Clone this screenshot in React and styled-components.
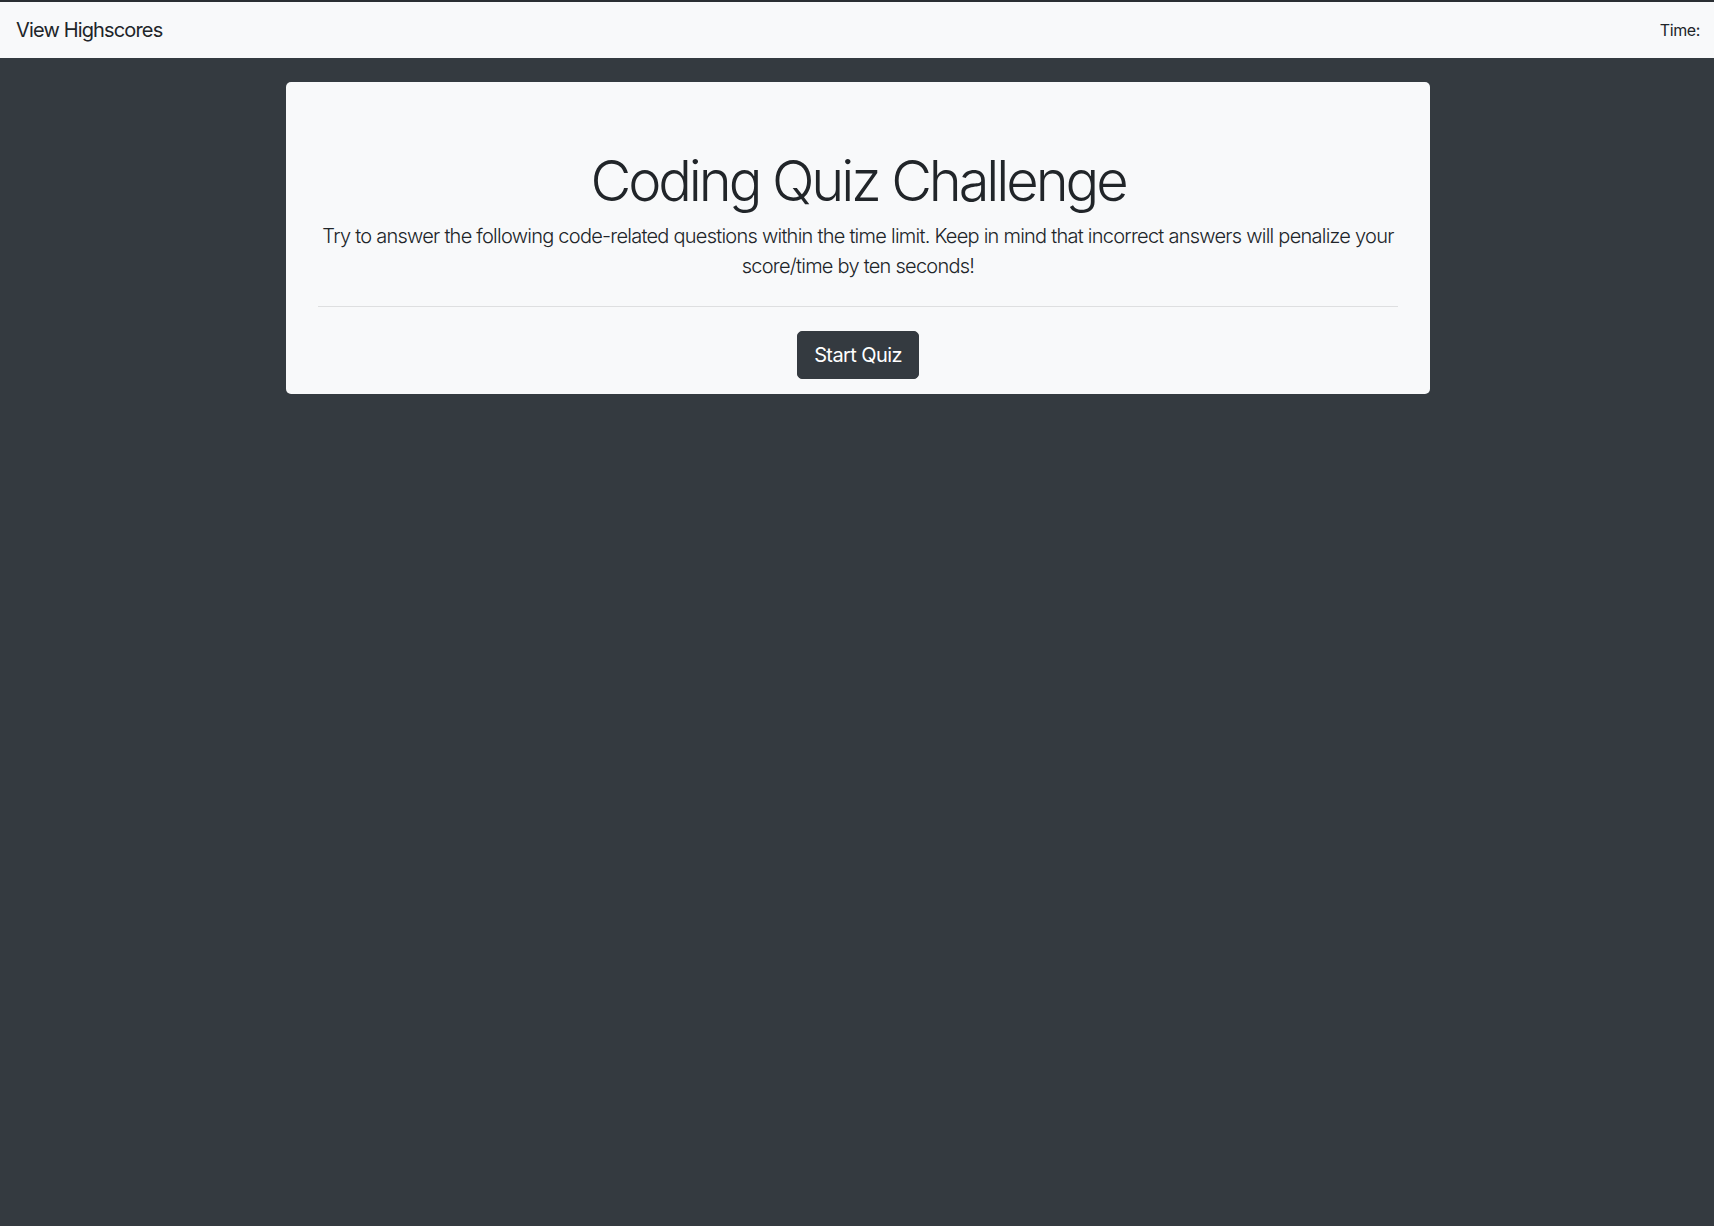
import React from 'react';
import styled, { createGlobalStyle } from 'styled-components';

const GlobalStyle = createGlobalStyle`
  html, body {
    margin: 0;
    padding: 0;
    background: #343a40;
    min-height: 100%;
  }
  body {
    font-family: Inter, "Noto Sans", "Liberation Sans", sans-serif;
    color: #212529;
    min-height: 1226px;
  }
  *, *::before, *::after {
    box-sizing: border-box;
  }
`;

const Navbar = styled.nav`
  display: flex;
  align-items: center;
  justify-content: space-between;
  height: 58px;
  padding: 0 14px 0 16px;
  background: #f8f9fa;
  border-top: 2px solid #2a2e33;
`;

const Brand = styled.a`
  font-size: 20px;
  line-height: 30px;
  color: #212529;
  text-decoration: none;
  letter-spacing: -0.85px;
  cursor: pointer;
`;

const Timer = styled.span`
  font-size: 16px;
  color: #212529;
  letter-spacing: -0.4px;
`;

const Container = styled.main`
  width: 1144px;
  margin: 24px auto 0;
  transform: translateX(1px);
`;

const Jumbotron = styled.section`
  background: #f8f9fa;
  border-radius: 5px;
  padding: 66px 32px 15px;
  text-align: center;
`;

const Title = styled.h1`
  margin: 0 0 6px;
  font-size: 56px;
  font-weight: 300;
  line-height: 1.2;
  letter-spacing: -3.1px;
`;

const Lead = styled.p`
  margin: 0 0 25px;
  font-size: 20px;
  font-weight: 300;
  line-height: 30px;
  letter-spacing: -0.75px;
`;

const Divider = styled.hr`
  margin: 0 0 24px;
  border: 0;
  border-top: 1px solid rgba(0, 0, 0, 0.1);
`;

const StartButton = styled.button`
  font-family: inherit;
  font-size: 20px;
  line-height: 30px;
  padding: 8px 16px;
  color: #fff;
  background: #343a40;
  border: 1px solid #343a40;
  border-radius: 5px;
  letter-spacing: -0.6px;
  cursor: pointer;
`;

export default function App() {
  return (
    <>
      <GlobalStyle />
      <Navbar>
        <Brand>View Highscores</Brand>
        <Timer>Time:</Timer>
      </Navbar>
      <Container>
        <Jumbotron>
          <Title>Coding Quiz Challenge</Title>
          <Lead>
            Try to answer the following code-related questions within the time limit. Keep in mind that
            incorrect answers will penalize your score/time by ten seconds!
          </Lead>
          <Divider />
          <StartButton>Start Quiz</StartButton>
        </Jumbotron>
      </Container>
    </>
  );
}
